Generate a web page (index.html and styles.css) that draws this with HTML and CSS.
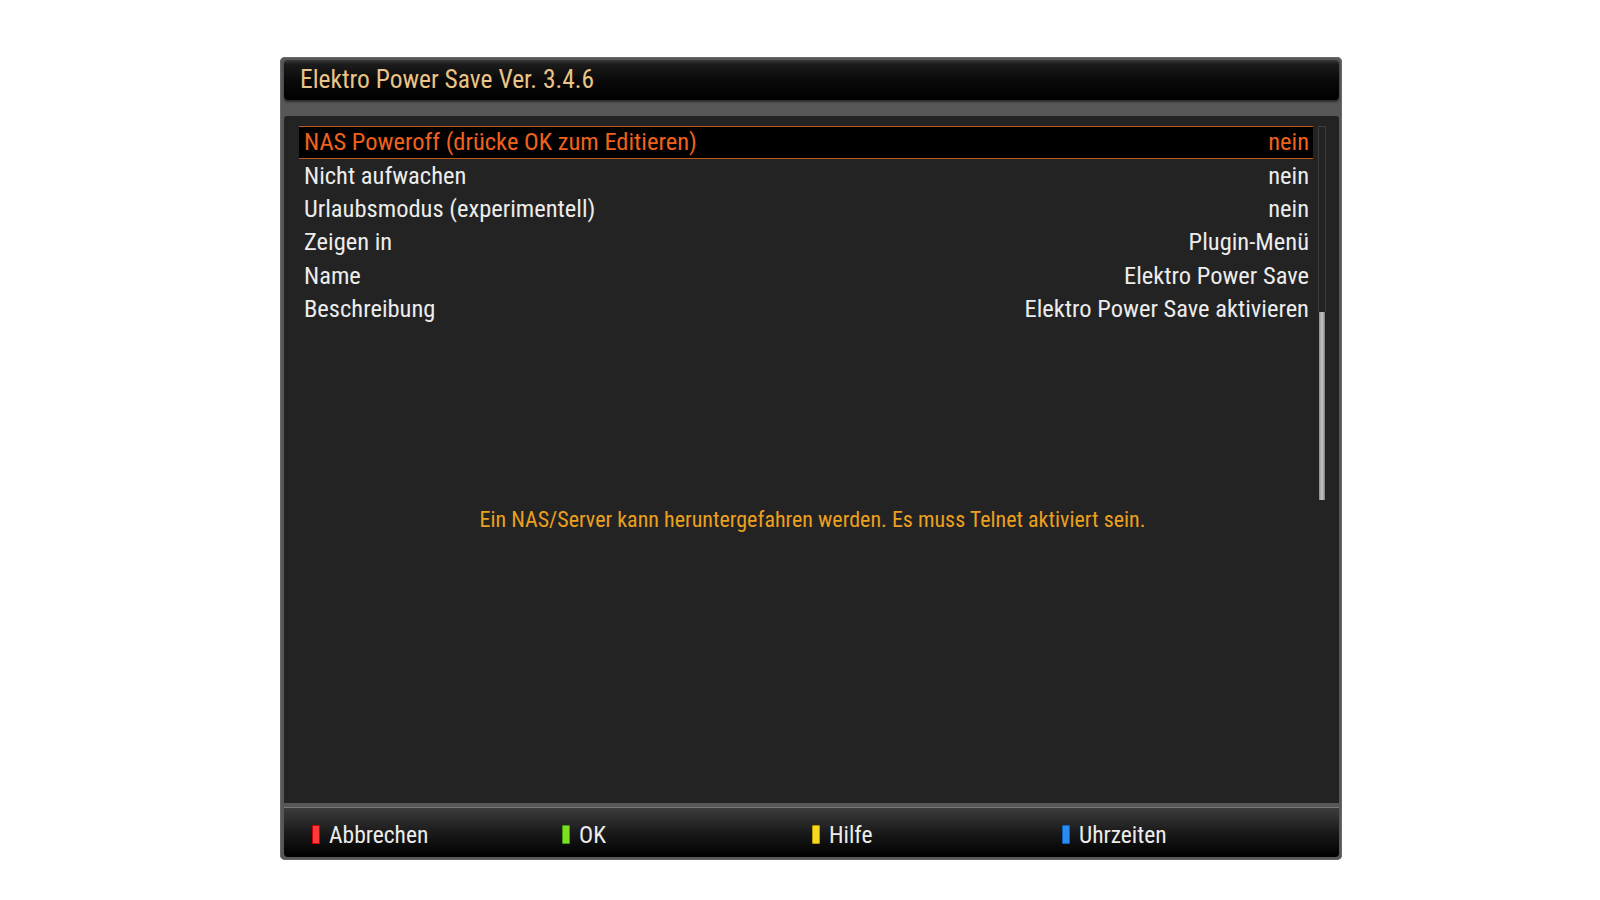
FILE: index.html
```html
<!DOCTYPE html>
<html lang="de">
<head>
<meta charset="utf-8">
<title>Elektro Power Save</title>
<link rel="stylesheet" href="styles.css">
</head>
<body>
<div class="screen">
  <div class="titlebar">Elektro Power Save Ver. 3.4.6</div>
  <div class="content">
    <div class="listarea">
      <div class="list">
        <div class="row selected"><span>NAS Poweroff (drücke OK zum Editieren)</span><span>nein</span></div>
        <div class="row"><span>Nicht aufwachen</span><span>nein</span></div>
        <div class="row"><span>Urlaubsmodus (experimentell)</span><span>nein</span></div>
        <div class="row"><span>Zeigen in</span><span>Plugin-Menü</span></div>
        <div class="row"><span>Name</span><span>Elektro Power Save</span></div>
        <div class="row"><span>Beschreibung</span><span>Elektro Power Save aktivieren</span></div>
      </div>
      <div class="scrollbar">
        <div class="scroll-track"></div>
        <div class="scroll-thumb"></div>
      </div>
    </div>
    <div class="description">Ein NAS/Server kann heruntergefahren werden. Es muss Telnet aktiviert sein.</div>
  </div>
  <div class="footer">
    <div class="key"><span class="swatch red"></span><span>Abbrechen</span></div>
    <div class="key"><span class="swatch green"></span><span>OK</span></div>
    <div class="key"><span class="swatch yellow"></span><span>Hilfe</span></div>
    <div class="key"><span class="swatch blue"></span><span>Uhrzeiten</span></div>
  </div>
</div>
</body>
</html>
```
FILE: styles.css
```css
html, body {
  margin: 0;
  padding: 0;
  background: #ffffff;
}
body {
  font-family: "Roboto Condensed", "Liberation Sans Narrow", Roboto, sans-serif;
  font-stretch: condensed;
  width: 1600px;
  height: 900px;
  overflow: hidden;
}
.screen {
  margin: 57px 0 0 280px;
  width: 1062px;
  height: 803px;
  box-sizing: border-box;
  padding: 3px 3px 3px 4px;
  background: #575757;
  border-radius: 5px;
  box-shadow: inset 0 0 0 1px #6a6a6a;
  display: flex;
  flex-direction: column;
}
.titlebar {
  height: 40px;
  flex: none;
  box-sizing: border-box;
  padding: 0 0 2px 16px;
  display: flex;
  align-items: center;
  background: linear-gradient(#3a3a3a 0px, #1c1c1c 4px, #0a0a0a 20px, #000 40px);
  border-radius: 4px;
  color: #e9c487;
  font-size: 25.5px;
  box-shadow: 0 2px 2px rgba(0,0,0,0.5);
}
.content {
  margin-top: 16px;
  flex: 1;
  background: #232323;
  border-radius: 3px 3px 0 0;
  padding: 10px 13px 0 15px;
  display: flex;
  flex-direction: column;
}
.listarea {
  display: flex;
  height: 374px;
  gap: 5px;
}
.list {
  flex: 1;
}
.row {
  height: 33.3px;
  box-sizing: border-box;
  display: flex;
  justify-content: space-between;
  align-items: center;
  padding: 0 4px 0 5px;
  color: #ececec;
  font-size: 24.5px;
  line-height: 1;
}
.row.selected {
  background: #000;
  border-top: 1px solid #c0581a;
  border-bottom: 1px solid #c0581a;
  color: #f0621c;
}
.scrollbar {
  width: 8px;
  display: flex;
  flex-direction: column;
}
.scroll-track {
  height: 186px;
  box-sizing: border-box;
  border: 1px solid #3c3c3c;
  border-bottom: none;
}
.scroll-thumb {
  flex: 1;
  background: linear-gradient(90deg, #8a8a8a, #c8c8c8 50%, #7a7a7a);
  margin: 0 1px;
}
.description {
  margin-top: 5px;
  text-align: center;
  color: #eba020;
  font-size: 22px;
  line-height: 30px;
}
.footer {
  margin-top: 4px;
  height: 50px;
  flex: none;
  box-sizing: border-box;
  border-top: 1px solid #777;
  background: linear-gradient(#3c3c3c, #1a1a1a 50%, #000);
  border-radius: 0 0 4px 4px;
  display: flex;
  align-items: center;
  padding: 4px 0 0 28px;
}
.key {
  width: 250px;
  display: flex;
  align-items: center;
  gap: 9px;
  color: #ececec;
  font-size: 23.5px;
}
.swatch {
  width: 8px;
  height: 19px;
  box-sizing: border-box;
  border-radius: 1px;
}
.red { background: #ff3a3a; border: 1px solid #c00; }
.green { background: #7ce020; border: 1px solid #4a9a10; }
.yellow { background: #f5d820; border: 1px solid #b89a00; }
.blue { background: #2a8cf0; border: 1px solid #1060c0; }
```
